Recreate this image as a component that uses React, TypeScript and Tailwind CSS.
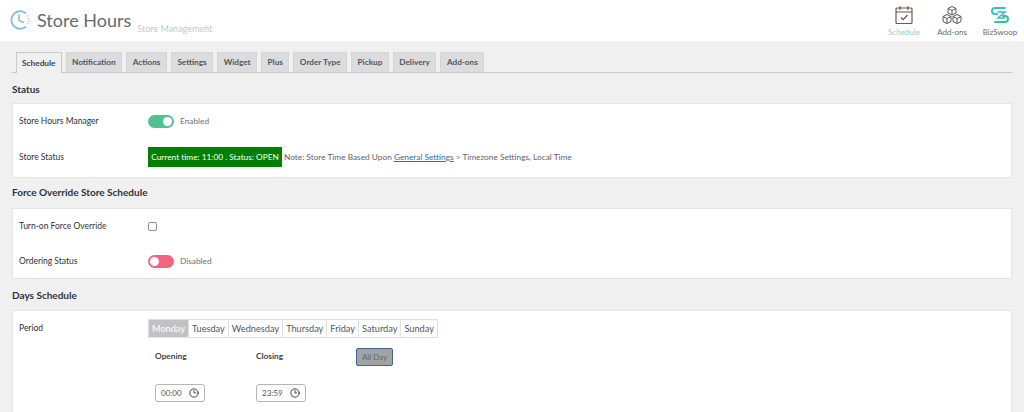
import { Clock3 } from "lucide-react";

const tabs = ["Schedule", "Notification", "Actions", "Settings", "Widget", "Plus", "Order Type", "Pickup", "Delivery", "Add-ons"];
const days = ["Monday", "Tuesday", "Wednesday", "Thursday", "Friday", "Saturday", "Sunday"];

const Logo = () => (
  <svg width="20" height="20" viewBox="0 0 20 20" fill="none" className="ml-[1px] mt-[1px] shrink-0">
    <path d="M15.5 3A8.8 8.8 0 1 0 15.5 17" stroke="#7cc4d8" strokeWidth="1.8" strokeLinecap="round" />
    <path d="M17.5 5.5a8.8 8.8 0 0 1 0 9.5" stroke="#bdbdbd" strokeWidth="1.5" strokeDasharray="1 1.6" />
    <path d="M9 5v5.4l4.2 2" stroke="#6cc5a1" strokeWidth="1.4" strokeLinecap="round" strokeLinejoin="round" />
  </svg>
);

const ScheduleIcon = () => (
  <svg width="20" height="20" viewBox="0 0 20 20" fill="none" stroke="#6b5b4b" strokeWidth="1.2">
    <rect x="2" y="3" width="16" height="15.5" rx="1" />
    <path d="M2 7h16M6 1v4M14 1v4" />
    <path d="M7 12.5l2.2 2.2L13.5 10" stroke="#555" />
  </svg>
);

const BoxesIcon = () => (
  <svg width="22" height="20" viewBox="0 0 22 20" fill="none" stroke="#555" strokeWidth="1" strokeLinejoin="round">
    <path d="M11 1.5l4 2v4.5l-4 2-4-2V3.5z" />
    <path d="M7 3.5l4 2 4-2M11 5.5V10" />
    <path d="M6 9.5l4 2v5l-4 2-4-2v-5z" />
    <path d="M2 11.5l4 2 4-2M6 13.5v5" />
    <path d="M16 9.5l4 2v5l-4 2-4-2v-5z" />
    <path d="M12 11.5l4 2 4-2M16 13.5v5" />
  </svg>
);

const BizSwoopIcon = () => (
  <svg width="20" height="18" viewBox="0 0 20 18" fill="none" strokeWidth="2" strokeLinecap="round">
    <path d="M15 2H5a3 3 0 0 0 0 6h2" stroke="#35c4c0" />
    <path d="M5 16h10a3 3 0 0 0 0-6h-2" stroke="#35c49a" />
    <path d="M8 6h7l-7 6h7" stroke="#3bb8d8" strokeWidth="1.5" />
  </svg>
);

const HeaderLink = ({ label, active, children }: { label: string; active?: boolean; children: React.ReactNode }) => (
  <div className="flex w-[48px] flex-col items-center">
    <div className="flex h-[20px] items-center">{children}</div>
    <span className={active ? "mt-[2px] text-[8px] leading-[11px] text-[#8fd3b4]" : "mt-[2px] text-[8px] leading-[11px] text-[#6b6b6b]"}>
      {label}
    </span>
  </div>
);

const Toggle = ({ on }: { on: boolean }) => (
  <div className={on ? "flex h-[13px] w-[26px] items-center justify-end rounded-full bg-[#4fc38f] px-[2px]" : "flex h-[13px] w-[26px] items-center justify-start rounded-full bg-[#f4647f] px-[2px]"}>
    <div className="h-[9px] w-[9px] rounded-full bg-white" />
  </div>
);

const Row = ({ label, className, children }: { label: string; className: string; children: React.ReactNode }) => (
  <div className={`flex items-center ${className}`}>
    <div className="w-[129px] shrink-0 text-[8.5px] text-[#2c3338]">{label}</div>
    {children}
  </div>
);

const Heading = ({ children, className }: { children: React.ReactNode; className: string }) => (
  <h2 className={`text-[10px] font-bold leading-[14px] text-[#2c3338] ${className}`}>{children}</h2>
);

const TimeInput = ({ value }: { value: string }) => (
  <div className="flex h-[18px] w-[50px] items-center justify-between rounded-[3px] border border-[#b5b5b5] bg-white pl-[5px] pr-[5px] text-[8px] text-[#555]">
    <span>{value}</span>
    <Clock3 size={10} strokeWidth={2} color="#222" />
  </div>
);

export default function App() {
  return (
    <div className="h-[412px] w-[1024px] overflow-hidden bg-[#f0f0f1] font-['Lato',sans-serif]">
      <header className="flex h-[41px] items-start justify-between bg-white pl-[9px]">
        <div className="flex items-start pt-[9px]">
          <Logo />
          <span className="ml-[7px] text-[18px] leading-[22px] text-[#666b6f]">Store Hours</span>
          <span className="ml-[6px] mt-[14px] text-[9px] leading-[12px] text-[#c5c8cb]">Store Management</span>
        </div>
        <div className="flex pt-[5px]">
          <HeaderLink label="Schedule" active><ScheduleIcon /></HeaderLink>
          <HeaderLink label="Add-ons"><BoxesIcon /></HeaderLink>
          <HeaderLink label="BizSwoop"><BizSwoopIcon /></HeaderLink>
        </div>
      </header>

      <main className="px-[12px]">
        <nav className="mt-[11px] flex h-[21px] gap-[4px] border-b border-[#c9c9c9] pl-[4px]">
          {tabs.map((tab, i) => (
            <div
              key={tab}
              className={
                i === 0
                  ? "flex h-[21px] items-center border border-b-0 border-[#c9c9c9] bg-[#f0f0f1] px-[5px] text-[8.3px] font-bold text-[#3c434a]"
                  : "flex h-[20px] items-center border border-b-0 border-[#d5d5d5] bg-[#dcdcde] px-[5.5px] text-[8.2px] font-bold text-[#50575e]"
              }
            >
              {tab}
            </div>
          ))}
        </nav>

        <Heading className="mt-[9px]">Status</Heading>
        <section className="mt-[7px] h-[75px] border border-[#e2e4e7] bg-white px-[6px]">
          <Row label="Store Hours Manager" className="h-[35px]">
            <Toggle on />
            <span className="ml-[6px] text-[8.3px] text-[#6b7075]">Enabled</span>
          </Row>
          <Row label="Store Status" className="h-[36px]">
            <div className="flex h-[20px] w-[134px] items-center justify-center bg-[#008000] text-[8.3px] text-white">
              Current time: 11:00 . Status: OPEN
            </div>
            <span className="ml-[2px] text-[8.3px] text-[#5f6468]">
              Note: Store Time Based Upon <a href="#" className="text-[#2f6fa8] underline">General Settings</a> {">"} Timezone Settings, Local Time
            </span>
          </Row>
        </section>

        <Heading className="mt-[7px]">Force Override Store Schedule</Heading>
        <section className="mt-[9px] h-[71px] border border-[#e2e4e7] bg-white px-[6px]">
          <Row label="Turn-on Force Override" className="h-[35px]">
            <div className="h-[9px] w-[9px] rounded-[2px] border border-[#8c8f94] bg-white" />
          </Row>
          <Row label="Ordering Status" className="h-[34px]">
            <Toggle on={false} />
            <span className="ml-[6px] text-[8.3px] text-[#6b7075]">Disabled</span>
          </Row>
        </section>

        <Heading className="mt-[9px]">Days Schedule</Heading>
        <section className="mt-[8px] h-[110px] border border-[#e2e4e7] bg-white px-[6px] pt-[8px]">
          <div className="flex items-start">
            <div className="w-[129px] shrink-0 pt-[3px] text-[8.5px] text-[#2c3338]">Period</div>
            <div>
              <div className="flex h-[19px] w-fit border border-[#e0e0e0]">
                {days.map((day, i) => (
                  <div
                    key={day}
                    className={
                      i === 0
                        ? "flex items-center bg-[#c2c2c2] px-[3px] text-[9.2px] text-white"
                        : "flex items-center border-l border-[#e0e0e0] px-[3px] text-[9.2px] text-[#50575e]"
                    }
                  >
                    {day}
                  </div>
                ))}
              </div>
              <div className="mt-[12px] flex pl-[7px]">
                <div className="w-[101px]">
                  <div className="text-[8.3px] font-bold leading-[12px] text-[#3c434a]">Opening</div>
                  <div className="mt-[22px]"><TimeInput value="00:00" /></div>
                </div>
                <div className="w-[100px]">
                  <div className="text-[8.3px] font-bold leading-[12px] text-[#3c434a]">Closing</div>
                  <div className="mt-[22px]"><TimeInput value="23:59" /></div>
                </div>
                <div className="-mt-[2px] flex h-[18px] w-[37px] items-center justify-center rounded-[2px] border border-[#3f6690] bg-[#a3a3a3] text-[8px] text-[#5a6672]">
                  All Day
                </div>
              </div>
            </div>
          </div>
        </section>
      </main>
    </div>
  );
}
